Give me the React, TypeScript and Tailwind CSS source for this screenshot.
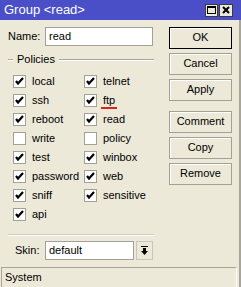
const POLICIES: [string, boolean, string | null, boolean][] = [
  ['local', true, 'telnet', true],
  ['ssh', true, 'ftp', true],
  ['reboot', true, 'read', true],
  ['write', false, 'policy', false],
  ['test', true, 'winbox', true],
  ['password', true, 'web', true],
  ['sniff', true, 'sensitive', true],
  ['api', true, null, false],
];

const BUTTONS = ['OK', 'Cancel', 'Apply', 'Comment', 'Copy', 'Remove'];

function CheckBox({ checked }: { checked: boolean }) {
  return (
    <span className="flex h-[13px] w-[13px] shrink-0 items-center justify-center border border-[#a3a197] bg-white">
      {checked && (
        <svg width="9" height="9" viewBox="0 0 9 9">
          <path d="M1 4 L3 6.5 L8 1" fill="none" stroke="#000" strokeWidth="2.2" />
        </svg>
      )}
    </span>
  );
}

function Policy({ label, checked, mark }: { label: string; checked: boolean; mark?: boolean }) {
  return (
    <div className="flex h-[19px] items-center gap-[6px]">
      <CheckBox checked={checked} />
      <span className="relative leading-none">
        {label}
        {mark && <span className="absolute left-[-2px] top-[12px] h-[2px] w-[16px] bg-[#e0201a]" />}
      </span>
    </div>
  );
}

export default function App() {
  return (
    <div
      className="flex h-[287px] w-[241px] flex-col bg-[#ece9d8] text-[11px] text-black"
      style={{ fontFamily: '"Liberation Sans", Arial, sans-serif' }}
    >
      {/* Title bar */}
      <div className="flex h-[21px] items-center justify-between bg-[#4a4fc8] pl-[4px] pr-[8px] text-[13px] text-white">
        <span>Group &lt;read&gt;</span>
        <div className="flex gap-[1px] pt-[1px]">
          <span className="flex h-[13px] w-[13px] items-center justify-center border border-[#3a3a3a] bg-[#ece9d8]">
            <span className="h-[8px] w-[9px] border border-t-2 border-black" />
          </span>
          <span className="flex h-[13px] w-[14px] items-center justify-center border border-[#3a3a3a] bg-[#ece9d8]">
            <svg width="8" height="8" viewBox="0 0 8 8">
              <path d="M1 1 L7 7 M7 1 L1 7" stroke="#000" strokeWidth="2" />
            </svg>
          </span>
        </div>
      </div>

      <div className="flex flex-1 flex-col border-r-2 border-[#a8a69c]">
        <div className="flex flex-1">
          {/* Left side */}
          <div className="flex w-[160px] flex-col pl-[8px] pt-[7px]">
            <div className="flex h-[19px] items-center">
              <span className="w-[37px]">Name:</span>
              <div className="flex h-[19px] w-[108px] items-center border border-[#a3a197] bg-white pl-[3px]">read</div>
            </div>

            {/* Policies */}
            <div className="mt-[8px] flex h-[12px] items-center pr-[6px]">
              <span className="h-[2px] w-[5px] border-t border-b border-t-[#a8a69c] border-b-white" />
              <span className="px-[4px] leading-none">Policies</span>
              <span className="h-[2px] flex-1 border-t border-b border-t-[#a8a69c] border-b-white" />
            </div>
            <div className="mt-[6px] flex flex-col pl-[5px]">
              {POLICIES.map(([a, ca, b, cb]) => (
                <div key={a} className="grid grid-cols-[71px_auto]">
                  <Policy label={a} checked={ca} />
                  {b ? <Policy label={b} checked={cb} mark={b === 'ftp'} /> : <div />}
                </div>
              ))}
            </div>

            <div className="mr-[6px] mt-[10px] h-[2px] border-t border-b border-t-[#d2cfc2] border-b-white" />

            {/* Skin */}
            <div className="mt-[5px] flex h-[19px] items-center pl-[7px]">
              <span className="w-[30px]">Skin:</span>
              <div className="flex h-[19px] w-[89px] items-center border border-[#a3a197] bg-white pl-[3px]">default</div>
              <div className="ml-[2px] flex h-[19px] w-[17px] items-center justify-center border border-[#c9c6b8] bg-[#ece9d8]">
                <svg width="7" height="9" viewBox="0 0 7 9">
                  <path d="M0 0.5 H7" stroke="#000" strokeWidth="1" />
                  <path d="M2 2 H5 V5 H7 L3.5 9 L0 5 H2 Z" fill="#000" />
                </svg>
              </div>
            </div>
          </div>

          {/* Right side buttons */}
          <div className="flex flex-col gap-[4px] pl-[9px] pt-[7px]">
            {BUTTONS.map((b) => (
              <div
                key={b}
                className={`flex h-[22px] w-[63px] items-center justify-center border bg-[#ece9d8] shadow-[inset_1px_1px_0_#fff] ${
                  b === 'OK' ? 'border-black' : 'border-[#a3a197]'
                } ${b === 'Comment' ? 'mt-[6px]' : ''}`}
              >
                {b}
              </div>
            ))}
          </div>
        </div>

        {/* Status bar */}
        <div className="mb-[1px] ml-[1px] mr-[2px] mt-[7px] flex h-[22px] items-center border border-t-[#a8a69c] border-l-[#a8a69c] border-b-white border-r-white pl-[3px]">
          System
        </div>
      </div>
    </div>
  );
}
